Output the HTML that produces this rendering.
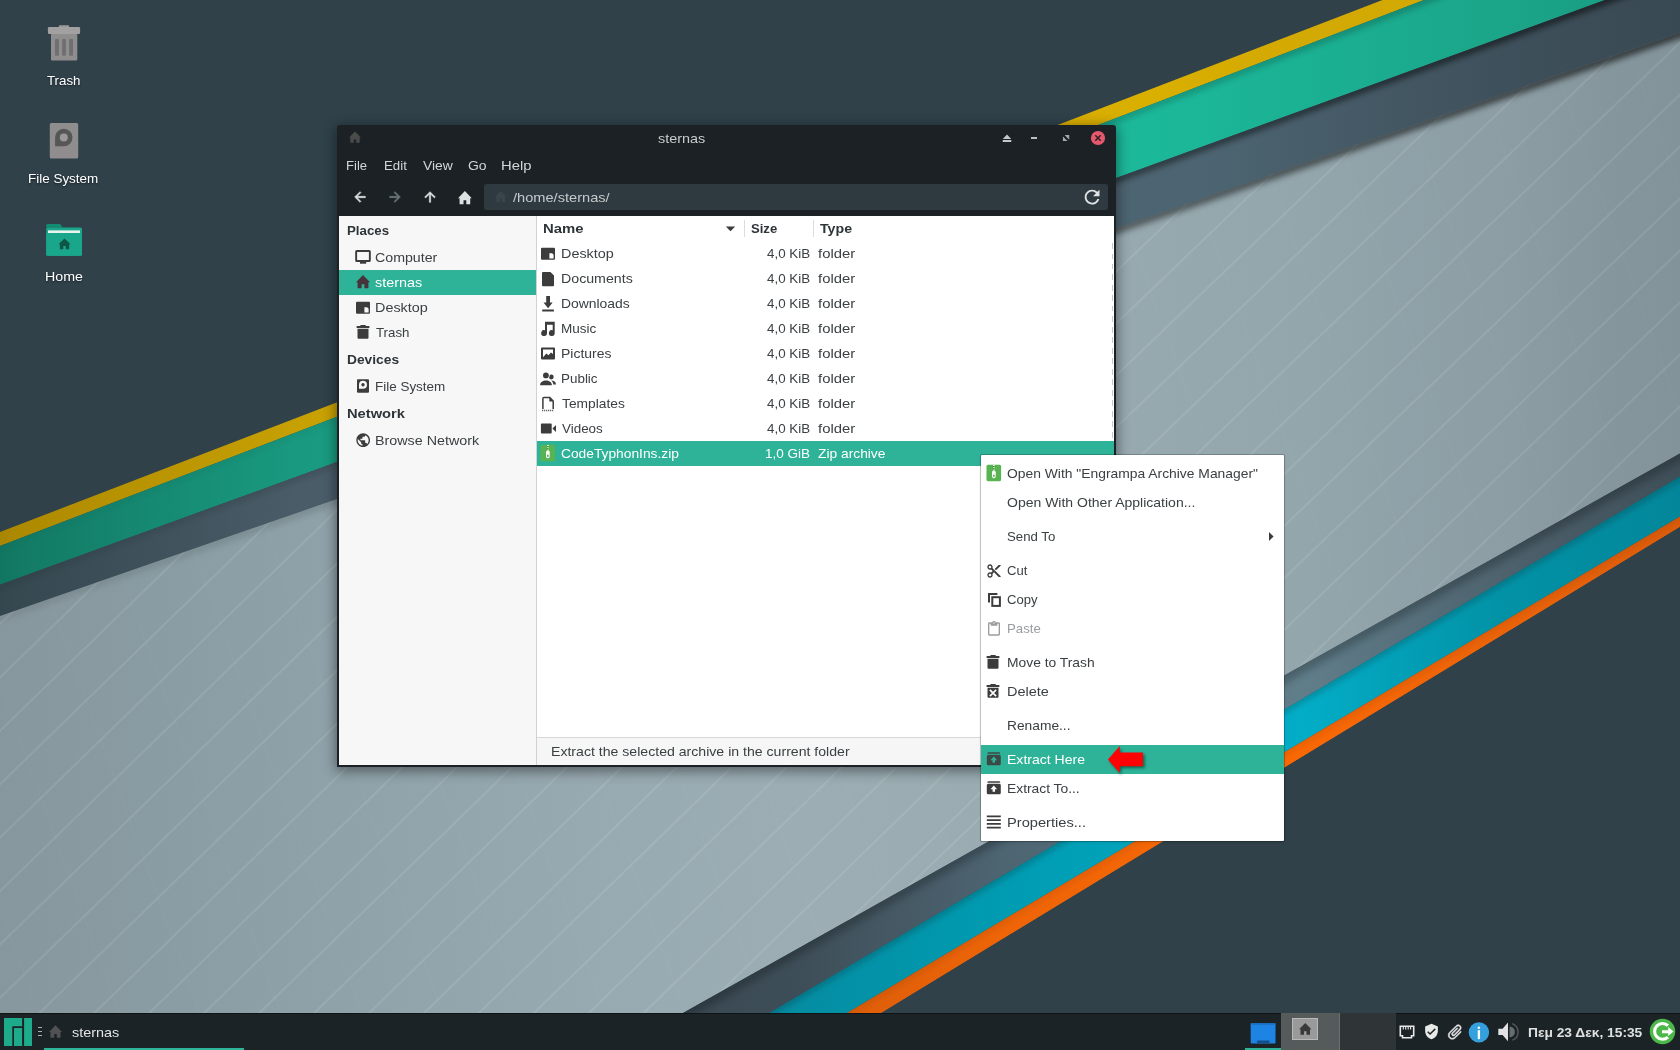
<!DOCTYPE html>
<html lang="en"><head><meta charset="utf-8"><title>sternas - File Manager</title>
<style>
html,body{margin:0;padding:0}
body{width:1680px;height:1050px;position:relative;overflow:hidden;background:#30414a;font-family:"Liberation Sans",sans-serif;}
.a{position:absolute;display:block}
.t{position:absolute;display:block;white-space:nowrap;height:20px;line-height:20px;transform-origin:0 50%;}
</style></head>
<body>
<svg class="a" style="left:0;top:0" width="1680" height="1050" viewBox="0 0 1680 1050">
<defs>
<linearGradient id="gy" gradientUnits="userSpaceOnUse" x1="0" y1="0" x2="1680" y2="0"><stop offset="0.000" stop-color="#a98600"/><stop offset="0.012" stop-color="#ae8a00"/><stop offset="0.179" stop-color="#c7a003"/><stop offset="0.476" stop-color="#d2a902"/><stop offset="0.685" stop-color="#d9af00"/><stop offset="0.774" stop-color="#d3a903"/><stop offset="0.851" stop-color="#d2a803"/></linearGradient>
<linearGradient id="gt" gradientUnits="userSpaceOnUse" x1="0" y1="0" x2="1680" y2="0"><stop offset="0.000" stop-color="#117661"/><stop offset="0.012" stop-color="#137a65"/><stop offset="0.179" stop-color="#199a80"/><stop offset="0.476" stop-color="#1bae90"/><stop offset="0.685" stop-color="#1cb89a"/><stop offset="0.774" stop-color="#1bb193"/><stop offset="0.893" stop-color="#1ba589"/><stop offset="0.958" stop-color="#199f83"/></linearGradient>
<linearGradient id="gd" gradientUnits="userSpaceOnUse" x1="0" y1="0" x2="1680" y2="0"><stop offset="0.000" stop-color="#34464e"/><stop offset="0.012" stop-color="#364850"/><stop offset="0.179" stop-color="#495c68"/><stop offset="0.476" stop-color="#4b606c"/><stop offset="0.714" stop-color="#4d6572"/><stop offset="0.893" stop-color="#3e505b"/><stop offset="1.000" stop-color="#394953"/></linearGradient>
<linearGradient id="gl" gradientUnits="userSpaceOnUse" x1="0" y1="0" x2="1680" y2="0"><stop offset="0.000" stop-color="#86979d"/><stop offset="0.037" stop-color="#88999f"/><stop offset="0.124" stop-color="#8b9ea5"/><stop offset="0.356" stop-color="#98aab1"/><stop offset="0.476" stop-color="#9caeb4"/><stop offset="0.595" stop-color="#9aacb2"/><stop offset="0.779" stop-color="#93a6ac"/><stop offset="0.898" stop-color="#8c9da4"/><stop offset="0.957" stop-color="#85969c"/><stop offset="1.000" stop-color="#82939a"/></linearGradient>
<linearGradient id="gd2" gradientUnits="userSpaceOnUse" x1="0" y1="0" x2="1680" y2="0"><stop offset="0.357" stop-color="#37454e"/><stop offset="0.476" stop-color="#3e4e58"/><stop offset="0.595" stop-color="#4d6471"/><stop offset="0.774" stop-color="#607e8a"/><stop offset="0.923" stop-color="#495c67"/><stop offset="1.000" stop-color="#3f4f58"/></linearGradient>
<linearGradient id="gc" gradientUnits="userSpaceOnUse" x1="0" y1="0" x2="1680" y2="0"><stop offset="0.417" stop-color="#05879b"/><stop offset="0.476" stop-color="#058da2"/><stop offset="0.595" stop-color="#009bb1"/><stop offset="0.774" stop-color="#03adc7"/><stop offset="0.893" stop-color="#0292a6"/><stop offset="1.000" stop-color="#03869a"/></linearGradient>
<linearGradient id="go" gradientUnits="userSpaceOnUse" x1="0" y1="0" x2="1680" y2="0"><stop offset="0.464" stop-color="#dc5c08"/><stop offset="0.536" stop-color="#e26009"/><stop offset="0.595" stop-color="#ee6407"/><stop offset="0.774" stop-color="#fa6804"/><stop offset="0.923" stop-color="#e8620a"/><stop offset="1.000" stop-color="#dc5c0a"/></linearGradient>
<linearGradient id="shg" gradientUnits="userSpaceOnUse" x1="0" y1="0" x2="1680" y2="0"><stop offset="0" stop-color="#000" stop-opacity=".08"/><stop offset=".25" stop-color="#000" stop-opacity=".15"/><stop offset=".6" stop-color="#000" stop-opacity=".45"/><stop offset="1" stop-color="#000" stop-opacity=".65"/></linearGradient>
<filter id="b3" x="-5%" y="-5%" width="110%" height="110%"><feGaussianBlur stdDeviation="3"/></filter>
<filter id="b5" x="-5%" y="-5%" width="110%" height="110%"><feGaussianBlur stdDeviation="5"/></filter>
<pattern id="ln" width="37.5" height="37.5" patternUnits="userSpaceOnUse" patternTransform="translate(1140.7 300) rotate(-43.8)"><rect x="0" y="-0.55" width="37.5" height="1.1" fill="#fff" fill-opacity=".17"/><rect x="0" y="36.95" width="37.5" height="1.1" fill="#fff" fill-opacity=".17"/></pattern>
<pattern id="lnb" width="38.3" height="38.3" patternUnits="userSpaceOnUse" patternTransform="translate(86.7 700) rotate(-44.2)"><rect x="0" y="-0.55" width="38.3" height="1.1" fill="#fff" fill-opacity=".17"/><rect x="0" y="37.75" width="38.3" height="1.1" fill="#fff" fill-opacity=".17"/></pattern>
<clipPath id="cR"><polygon points="1015,0 1680,0 1680,1050 722,1050 1015,767"/></clipPath><clipPath id="cL"><polygon points="0,0 1015,0 1015,767 722,1050 0,1050"/></clipPath>
<pattern id="ln2" width="76" height="76" patternUnits="userSpaceOnUse" patternTransform="translate(86.7 700) rotate(70)"><rect x="0" y="0" width="76" height="1" fill="#fff" fill-opacity=".025"/></pattern>

<clipPath id="clg"><polygon points="0.0,616.0 1680.0,32.4 1680.0,453.5 617.1,1050.0 0.0,1050.0"/></clipPath>
<clipPath id="cdg"><polygon points="0.0,584.7 1605.0,0.0 1680.0,0.0 1680.0,32.4 0.0,616.0"/></clipPath>
<clipPath id="cd2"><polygon points="1680.0,453.5 1680.0,476.6 706.2,1050.0 617.1,1050.0"/></clipPath>
<clipPath id="ccy"><polygon points="1680.0,476.6 1680.0,516.4 784.9,1050.0 706.2,1050.0"/></clipPath>
<clipPath id="cog"><polygon points="1680.0,516.4 1680.0,527.0 820.6,1050.0 784.9,1050.0"/></clipPath>
<clipPath id="ctl"><polygon points="0.0,546.0 1424.0,0.0 1605.0,0.0 0.0,584.7"/></clipPath>
</defs>
<rect width="1680" height="1050" fill="#30414a"/>
<polygon fill="url(#gy)" points="0.0,532.0 1382.5,0.0 1424.0,0.0 0.0,546.0"/>
<polygon fill="url(#gt)" points="0.0,546.0 1424.0,0.0 1605.0,0.0 0.0,584.7"/>
<g clip-path="url(#ctl)" opacity=".45"><line x1="-20" y1="554.7" x2="1700" y2="-104.8" stroke="url(#shg)" stroke-width="6" filter="url(#b3)"/></g>
<polygon fill="url(#gd)" points="0.0,584.7 1605.0,0.0 1680.0,0.0 1680.0,32.4 0.0,616.0"/>
<g clip-path="url(#cdg)"><line x1="-20" y1="593.0" x2="1700" y2="-33.6" stroke="url(#shg)" stroke-width="7" filter="url(#b3)"/></g>
<polygon fill="url(#gl)" points="0.0,616.0 1680.0,32.4 1680.0,453.5 617.1,1050.0 0.0,1050.0"/>
<polygon fill="url(#ln)" clip-path="url(#cR)" points="0.0,616.0 1680.0,32.4 1680.0,453.5 617.1,1050.0 0.0,1050.0"/>
<polygon fill="url(#lnb)" clip-path="url(#cL)" points="0.0,616.0 1680.0,32.4 1680.0,453.5 617.1,1050.0 0.0,1050.0"/>
<polygon fill="url(#ln2)" points="0.0,616.0 1680.0,32.4 1680.0,453.5 617.1,1050.0 0.0,1050.0"/>
<g clip-path="url(#clg)"><line x1="-20" y1="623.9" x2="1700" y2="26.5" stroke="url(#shg)" stroke-width="9" filter="url(#b3)"/></g>
<polygon fill="url(#gd2)" points="1680.0,453.5 1680.0,476.6 706.2,1050.0 617.1,1050.0"/>
<g clip-path="url(#cd2)"><line x1="500" y1="1116.7" x2="1700" y2="443.3" stroke="#000" stroke-opacity=".3" stroke-width="10" filter="url(#b5)"/></g>
<polygon fill="url(#gc)" points="1680.0,476.6 1680.0,516.4 784.9,1050.0 706.2,1050.0"/>
<g clip-path="url(#ccy)"><line x1="500" y1="1172.4" x2="1700" y2="465.8" stroke="#000" stroke-opacity=".3" stroke-width="4" filter="url(#b3)"/></g>
<polygon fill="url(#go)" points="1680.0,516.4 1680.0,527.0 820.6,1050.0 784.9,1050.0"/>
<g clip-path="url(#cog)"><line x1="500" y1="1220.9" x2="1700" y2="505.5" stroke="#000" stroke-opacity=".18" stroke-width="2.5" filter="url(#b3)"/></g>
<polygon fill="#30414a" points="1680.0,527.0 1680.0,1050.0 820.6,1050.0"/>
</svg>
<svg class="a" style="left:44px;top:22px;" width="40" height="42" viewBox="0 0 40 42">
<rect x="14.8" y="3.3" width="10.3" height="2.5" rx="1" fill="#9a9a9a"/>
<rect x="3.9" y="5" width="32.2" height="7" rx="1.2" fill="#a2a0a0"/>
<rect x="7" y="12" width="26.3" height="26.6" rx="1" fill="#8f8d8d"/>
<rect x="11" y="17.1" width="3.9" height="16.7" rx=".8" fill="#6f6f6f"/>
<rect x="18.1" y="17.1" width="3.8" height="16.7" rx=".8" fill="#6f6f6f"/>
<rect x="25.1" y="17.1" width="3.9" height="16.7" rx=".8" fill="#6f6f6f"/>
</svg>
<span class="t" style="left:46.55px;top:70.58px;font-size:13.33px;color:#ffffff;transform:scaleX(0.9969);text-shadow:0 1px 2px rgba(0,0,0,.6);">Trash</span>
<svg class="a" style="left:46px;top:120px;" width="36" height="42" viewBox="0 0 36 42">
<rect x="3.8" y="3" width="28.4" height="35.5" rx="1.5" fill="#8f8d8d"/>
<path d="M9.1 8.8 h8.7 a8.7 8.7 0 1 1 -8.7 8.7z" fill="#565656" transform="translate(0 26.3) scale(1 -1) translate(0 -8.7)"/>
<circle cx="17.8" cy="17.5" r="4" fill="#9a9898"/>
</svg>
<span class="t" style="left:27.99px;top:168.78px;font-size:13.33px;color:#ffffff;transform:scaleX(1.0096);text-shadow:0 1px 2px rgba(0,0,0,.6);">File System</span>
<svg class="a" style="left:44px;top:222px;" width="40" height="36" viewBox="0 0 40 36">
<path d="M2.2 3.5 a1.5 1.5 0 0 1 1.5-1.5 h12.5 l2.3 3.5 h-16.3z" fill="#128d74"/>
<rect x="2.2" y="5.5" width="35.8" height="28.2" rx="1.5" fill="#19a68a"/>
<rect x="4" y="8.4" width="32" height="2.6" fill="#e9f3f0"/>
<rect x="2.2" y="11" width="35.8" height="22.7" rx="1.5" fill="#19a68a"/>
<path transform="translate(14.5 16.6) scale(.86 .8)" fill="#0d5647" d="M7 0L14 7.2H12.4V13.3H8.4V9.3H5.6V13.3H1.6V7.2H0Z"/>
</svg>
<span class="t" style="left:44.63px;top:267.38px;font-size:13.33px;color:#ffffff;transform:scaleX(1.0676);text-shadow:0 1px 2px rgba(0,0,0,.6);">Home</span>
<div class="a" style="left:337px;top:125px;width:779px;height:642px;background:#1b2124;box-shadow:0 3px 13px 1px rgba(0,0,0,.45);border-radius:3px 3px 0 0;"></div>
<svg class="a" style="left:348.5px;top:131.2px;overflow:visible;" width="12" height="12.4" viewBox="0 0 14 13.4"><path fill="#4b4b4b" d="M7 0L14 7.2H12.4V13.3H8.4V9.3H5.6V13.3H1.6V7.2H0Z"/></svg>
<span class="t" style="left:658.46px;top:128.68px;font-size:13.33px;color:#c9cdcf;transform:scaleX(1.0807);">sternas</span>
<svg class="a" style="left:1001px;top:131px;" width="14" height="14" viewBox="0 0 14 14"><path fill="#c3c9ca" d="M1.7 11h8.6v-1.9H1.7zM6 3.4L1.8 8h8.4z"/></svg>
<div class="a" style="left:1031px;top:137px;width:6px;height:2px;background:#b9bfc0;"></div>
<svg class="a" style="left:1062px;top:134px;" width="8" height="8" viewBox="0 0 8 8"><path fill="#a4a9aa" d="M7.2 1.1v4.6L2.6 1.1zM.9 7.1V2.5l4.6 4.6z"/></svg>
<svg class="a" style="left:1090px;top:130px;" width="16" height="16" viewBox="0 0 16 16"><circle cx="8" cy="8" r="7.1" fill="#e8586d"/><path d="M5.3 5.3l5.4 5.4M10.7 5.3l-5.4 5.4" stroke="#2a2024" stroke-width="1.5"/></svg>
<span class="t" style="left:346.42px;top:156.48px;font-size:13.33px;color:#d2d6d8;transform:scaleX(0.9800);">File</span>
<span class="t" style="left:383.71px;top:156.48px;font-size:13.33px;color:#d2d6d8;transform:scaleX(0.9931);">Edit</span>
<span class="t" style="left:422.74px;top:156.48px;font-size:13.33px;color:#d2d6d8;transform:scaleX(1.0407);">View</span>
<span class="t" style="left:467.61px;top:156.48px;font-size:13.33px;color:#d2d6d8;transform:scaleX(1.0485);">Go</span>
<span class="t" style="left:501.09px;top:156.48px;font-size:13.33px;color:#d2d6d8;transform:scaleX(1.1107);">Help</span>
<svg class="a" style="left:352px;top:189px" width="16" height="16" viewBox="0 0 24 24" ><path fill="#dde1e2" d="M20 11H7.83l5.59-5.59L12 4l-8 8 8 8 1.41-1.41L7.83 13H20v-2z" stroke="#dde1e2" stroke-width="0.9"/></svg>
<svg class="a" style="left:386.5px;top:189px" width="16" height="16" viewBox="0 0 24 24" ><path fill="#6d7578" d="M12 4l-1.41 1.41L16.17 11H4v2h12.17l-5.58 5.59L12 20l8-8z" stroke="#6d7578" stroke-width="0.9"/></svg>
<svg class="a" style="left:422px;top:189px" width="16" height="16" viewBox="0 0 24 24" ><path fill="#dde1e2" d="M4 12l1.41 1.41L11 7.83V20h2V7.83l5.58 5.59L20 12l-8-8-8 8z" stroke="#dde1e2" stroke-width="0.9"/></svg>
<svg class="a" style="left:458px;top:190.9px;overflow:visible;" width="13.8" height="13.3" viewBox="0 0 14 13.4"><path fill="#dde1e2" d="M7 0L14 7.2H12.4V13.3H8.4V9.3H5.6V13.3H1.6V7.2H0Z"/></svg>
<div class="a" style="left:484px;top:184px;width:624px;height:26px;background:#2f3a40;border-radius:3px;"></div>
<svg class="a" style="left:494.8px;top:191.2px;overflow:visible;" width="11.5" height="11.3" viewBox="0 0 14 13.4"><path fill="#3a4549" d="M7 0L14 7.2H12.4V13.3H8.4V9.3H5.6V13.3H1.6V7.2H0Z"/></svg>
<span class="t" style="left:513.00px;top:188.28px;font-size:13.33px;color:#c5cacc;transform:scaleX(1.0966);">/home/sternas/</span>
<svg class="a" style="left:1081.1px;top:185.8px" width="22.2" height="22.2" viewBox="0 0 24 24" ><path fill="#dfe3e4" d="M17.65 6.35C16.2 4.9 14.21 4 12 4c-4.42 0-7.99 3.58-7.99 8s3.57 8 7.99 8c3.73 0 6.84-2.55 7.73-6h-2.08c-.82 2.33-3.04 4-5.65 4-3.31 0-6-2.69-6-6s2.69-6 6-6c1.66 0 3.14.69 4.22 1.78L13 11h7V4l-2.35 2.35z"/></svg>
<div class="a" style="left:339px;top:216px;width:197px;height:549px;background:#f7f7f7;"></div>
<div class="a" style="left:536px;top:216px;width:1px;height:549px;background:#d2d2d2;"></div>
<div class="a" style="left:537px;top:216px;width:577px;height:522px;background:#ffffff;"></div>
<div class="a" style="left:537px;top:737px;width:577px;height:1px;background:#d8d8d8;"></div>
<div class="a" style="left:537px;top:738px;width:577px;height:27px;background:#f6f6f6;"></div>
<span class="t" style="left:346.90px;top:221.28px;font-size:13.33px;color:#2e3538;font-weight:700;transform:scaleX(0.9963);">Places</span>
<svg class="a" style="left:355px;top:249px;" width="16" height="16" viewBox="0 0 16 16"><rect x="1.15" y="1.95" width="13.7" height="10.1" rx=".6" fill="none" stroke="#3c3c3c" stroke-width="1.9"/><rect x="5" y="13" width="6.2" height="1.7" fill="#3c3c3c"/></svg>
<span class="t" style="left:375.00px;top:248.28px;font-size:13.33px;color:#3b4043;transform:scaleX(1.0643);">Computer</span>
<div class="a" style="left:339px;top:270px;width:197px;height:25px;background:#2eb398;"></div>
<svg class="a" style="left:355.9px;top:275.3px;overflow:visible;" width="14" height="13.5" viewBox="0 0 14 13.4"><path fill="#47343a" d="M7 0L14 7.2H12.4V13.3H8.4V9.3H5.6V13.3H1.6V7.2H0Z"/></svg>
<span class="t" style="left:375.26px;top:273.28px;font-size:13.33px;color:#ffffff;transform:scaleX(1.0807);">sternas</span>
<svg class="a" style="left:355px;top:299.5px;" width="16" height="16" viewBox="0 0 16 16"><path fill="#3c3c3c" d="M2 1.7h12a1 1 0 0 1 1 1v10a1 1 0 0 1-1 1H2a1 1 0 0 1-1-1v-10a1 1 0 0 1 1-1z"/><path fill="#f7f7f7" d="M9.4 7.2h2.7l1.5 1.5v3.8H9.4z"/></svg>
<span class="t" style="left:374.72px;top:298.28px;font-size:13.33px;color:#3b4043;transform:scaleX(1.0794);">Desktop</span>
<svg class="a" style="left:354.6px;top:324px;" width="16" height="16" viewBox="0 0 16 16"><path fill="#3c3c3c" d="M5.4 1h5.3v1.2H5.4zM1.6 2.1h12.8v1.8H1.6zM2.5 4.8h11v9a1 1 0 0 1-1 1h-9a1 1 0 0 1-1-1z"/></svg>
<span class="t" style="left:375.55px;top:323.28px;font-size:13.33px;color:#3b4043;transform:scaleX(0.9969);">Trash</span>
<span class="t" style="left:346.87px;top:350.28px;font-size:13.33px;color:#2e3538;font-weight:700;transform:scaleX(1.0338);">Devices</span>
<svg class="a" style="left:355px;top:378px;" width="16" height="16" viewBox="0 0 16 16"><path fill="#3c3c3c" d="M3 1.2h10a1 1 0 0 1 1 1v11.6a1 1 0 0 1-1 1H3a1 1 0 0 1-1-1V2.2a1 1 0 0 1 1-1z"/><path fill="#f7f7f7" d="M4 10.8V6.8a4 4 0 1 1 4 4z"/><circle cx="8" cy="6.8" r="1.7" fill="#3c3c3c"/></svg>
<span class="t" style="left:374.79px;top:377.28px;font-size:13.33px;color:#3b4043;transform:scaleX(1.0096);">File System</span>
<span class="t" style="left:346.80px;top:404.28px;font-size:13.33px;color:#2e3538;font-weight:700;transform:scaleX(1.1029);">Network</span>
<svg class="a" style="left:355px;top:432px" width="16.4" height="16.4" viewBox="0 0 24 24" ><path fill="#3c3c3c" d="M12 2C6.48 2 2 6.48 2 12s4.48 10 10 10 10-4.48 10-10S17.52 2 12 2zm-1 17.93c-3.95-.49-7-3.85-7-7.93 0-.62.08-1.21.21-1.79L9 15v1c0 1.1.9 2 2 2v1.93zm6.9-2.54c-.26-.81-1-1.39-1.9-1.39h-1v-3c0-.55-.45-1-1-1H8v-2h2c.55 0 1-.45 1-1V7h2c1.1 0 2-.9 2-2v-.41c2.93 1.19 5 4.06 5 7.41 0 2.08-.8 3.97-2.1 5.39z"/></svg>
<span class="t" style="left:374.73px;top:431.28px;font-size:13.33px;color:#3b4043;transform:scaleX(1.0729);">Browse Network</span>
<span class="t" style="left:542.68px;top:219.08px;font-size:13.33px;color:#2e3538;font-weight:700;transform:scaleX(1.1165);">Name</span>
<svg class="a" style="left:725px;top:226px;" width="11" height="6" viewBox="0 0 11 6"><path fill="#3c3c3c" d="M.8.6h9.4L5.5 5.2z"/></svg>
<div class="a" style="left:744px;top:220px;width:1px;height:17px;background:#dcdcdc;"></div>
<span class="t" style="left:750.81px;top:219.08px;font-size:13.33px;color:#2e3538;font-weight:700;transform:scaleX(0.9825);">Size</span>
<div class="a" style="left:813px;top:220px;width:1px;height:17px;background:#dcdcdc;"></div>
<span class="t" style="left:820.23px;top:219.08px;font-size:13.33px;color:#2e3538;font-weight:700;transform:scaleX(1.0644);">Type</span>
<div class="a" style="left:1112px;top:243px;width:1px;height:495px;background:repeating-linear-gradient(180deg,#c9c9c9 0 5.5px,transparent 5.5px 10.5px);"></div>
<span class="t" style="left:560.72px;top:244.28px;font-size:13.33px;color:#3b4043;transform:scaleX(1.0794);">Desktop</span>
<span class="t" style="left:767.05px;top:244.28px;font-size:13.33px;color:#3b4043;transform:scaleX(1.0024);">4,0 KiB</span>
<span class="t" style="left:818.22px;top:244.28px;font-size:13.33px;color:#3b4043;transform:scaleX(1.1145);">folder</span>
<span class="t" style="left:560.74px;top:269.28px;font-size:13.33px;color:#3b4043;transform:scaleX(1.0644);">Documents</span>
<span class="t" style="left:767.05px;top:269.28px;font-size:13.33px;color:#3b4043;transform:scaleX(1.0024);">4,0 KiB</span>
<span class="t" style="left:818.22px;top:269.28px;font-size:13.33px;color:#3b4043;transform:scaleX(1.1145);">folder</span>
<span class="t" style="left:560.76px;top:294.28px;font-size:13.33px;color:#3b4043;transform:scaleX(1.0426);">Downloads</span>
<span class="t" style="left:767.05px;top:294.28px;font-size:13.33px;color:#3b4043;transform:scaleX(1.0024);">4,0 KiB</span>
<span class="t" style="left:818.22px;top:294.28px;font-size:13.33px;color:#3b4043;transform:scaleX(1.1145);">folder</span>
<span class="t" style="left:560.79px;top:319.28px;font-size:13.33px;color:#3b4043;transform:scaleX(1.0149);">Music</span>
<span class="t" style="left:767.05px;top:319.28px;font-size:13.33px;color:#3b4043;transform:scaleX(1.0024);">4,0 KiB</span>
<span class="t" style="left:818.22px;top:319.28px;font-size:13.33px;color:#3b4043;transform:scaleX(1.1145);">folder</span>
<span class="t" style="left:560.75px;top:344.28px;font-size:13.33px;color:#3b4043;transform:scaleX(1.0481);">Pictures</span>
<span class="t" style="left:767.05px;top:344.28px;font-size:13.33px;color:#3b4043;transform:scaleX(1.0024);">4,0 KiB</span>
<span class="t" style="left:818.22px;top:344.28px;font-size:13.33px;color:#3b4043;transform:scaleX(1.1145);">folder</span>
<span class="t" style="left:560.79px;top:369.28px;font-size:13.33px;color:#3b4043;transform:scaleX(1.0071);">Public</span>
<span class="t" style="left:767.05px;top:369.28px;font-size:13.33px;color:#3b4043;transform:scaleX(1.0024);">4,0 KiB</span>
<span class="t" style="left:818.22px;top:369.28px;font-size:13.33px;color:#3b4043;transform:scaleX(1.1145);">folder</span>
<span class="t" style="left:561.54px;top:394.28px;font-size:13.33px;color:#3b4043;transform:scaleX(1.0333);">Templates</span>
<span class="t" style="left:767.05px;top:394.28px;font-size:13.33px;color:#3b4043;transform:scaleX(1.0024);">4,0 KiB</span>
<span class="t" style="left:818.22px;top:394.28px;font-size:13.33px;color:#3b4043;transform:scaleX(1.1145);">folder</span>
<span class="t" style="left:561.55px;top:419.28px;font-size:13.33px;color:#3b4043;transform:scaleX(1.0063);">Videos</span>
<span class="t" style="left:767.05px;top:419.28px;font-size:13.33px;color:#3b4043;transform:scaleX(1.0024);">4,0 KiB</span>
<span class="t" style="left:818.22px;top:419.28px;font-size:13.33px;color:#3b4043;transform:scaleX(1.1145);">folder</span>
<div class="a" style="left:537px;top:441px;width:577px;height:25px;background:#2eb398;"></div>
<span class="t" style="left:561.03px;top:444.28px;font-size:13.33px;color:#ffffff;transform:scaleX(1.0333);">CodeTyphonIns.zip</span>
<span class="t" style="left:764.58px;top:444.28px;font-size:13.33px;color:#ffffff;transform:scaleX(1.0152);">1,0 GiB</span>
<span class="t" style="left:817.78px;top:444.28px;font-size:13.33px;color:#ffffff;transform:scaleX(1.0344);">Zip archive</span>
<svg class="a" style="left:540px;top:245.5px;" width="16" height="16" viewBox="0 0 16 16"><path fill="#3c3c3c" d="M2 1.7h12a1 1 0 0 1 1 1v10a1 1 0 0 1-1 1H2a1 1 0 0 1-1-1v-10a1 1 0 0 1 1-1z"/><path fill="#fff" d="M9.4 7.2h2.7l1.5 1.5v3.8H9.4z"/></svg>
<svg class="a" style="left:540px;top:270.5px;" width="16" height="16" viewBox="0 0 16 16"><path fill="#3c3c3c" d="M3 .9h7.4L14 4.5v9.8a1 1 0 0 1-1 1H3a1 1 0 0 1-1-1V1.9a1 1 0 0 1 1-1z"/></svg>
<svg class="a" style="left:540px;top:295.5px;" width="16" height="16" viewBox="0 0 16 16"><path fill="#3c3c3c" d="M6.2 -.4h3.8v6.9h2.7L8.1 12.2 3.5 6.5h2.7zM2.2 13.6h11.7v2H2.2z"/></svg>
<svg class="a" style="left:540px;top:320.5px;" width="16" height="16" viewBox="0 0 16 16"><path fill="#3c3c3c" d="M5 .8h9.7v11.2a2.9 2.9 0 1 1-2-2.75V3.8H7v8.2a2.9 2.9 0 1 1-2-2.75z"/></svg>
<svg class="a" style="left:540px;top:345.5px;" width="16" height="16" viewBox="0 0 16 16"><path fill="#3c3c3c" d="M2 1.5h12a1 1 0 0 1 1 1v10a1 1 0 0 1-1 1H2a1 1 0 0 1-1-1v-10a1 1 0 0 1 1-1z"/><path fill="#fff" d="M3 3.5h10v4.6l-2-1.6-2.6 2.7-2-1.6L3 11.2z"/></svg>
<svg class="a" style="left:540px;top:370.5px;overflow:visible;" width="16" height="16" viewBox="0 0 16 16"><circle cx="11.3" cy="6" r="2.4" fill="#3c3c3c"/><circle cx="5.9" cy="4.4" r="3.7" fill="#fff"/><circle cx="5.9" cy="4.4" r="2.9" fill="#3c3c3c"/><path fill="#3c3c3c" d="M.1 14.2C.1 11 3 9.5 6 9.5S11.9 11 11.9 14.2ZM11.1 9.6C14 9.6 16 11.2 16 13.4H13.3C13.3 11.8 12.4 10.5 11.1 9.6Z"/></svg>
<svg class="a" style="left:540px;top:395.5px;" width="16" height="16" viewBox="0 0 16 16"><path fill="none" stroke="#3c3c3c" stroke-width="1.5" d="M2.9 13V2.6a1 1 0 0 1 1-1h5.9l3.4 3.4V13"/><path fill="#3c3c3c" d="M9.3 1.6v4h4z"/><path stroke="#3c3c3c" stroke-width="1.3" stroke-dasharray="1 1" d="M2.2 14.5h11.8"/></svg>
<svg class="a" style="left:540px;top:420.5px;" width="16" height="16" viewBox="0 0 16 16"><path fill="#3c3c3c" d="M1.8 2.6h9a.9.9 0 0 1 .9.9v8a.9.9 0 0 1-.9.9h-9a.9.9 0 0 1-.9-.9v-8a.9.9 0 0 1 .9-.9zM12.4 7.5L16 4.1v6.8z"/></svg>
<svg class="a" style="left:540px;top:445px;overflow:visible;" width="16" height="16.4" viewBox="0 0 16 16.4"><rect x=".5" y="-.2" width="14.6" height="16.4" rx="1.5" fill="#58b452"/><path stroke="#fff" stroke-width="1.6" stroke-dasharray="1.1 1.1" d="M7.8 0v5.5"/><path stroke="#2b5e28" stroke-width=".8" stroke-dasharray="1.1 1.1" stroke-dashoffset="1.1" d="M7.4 0v5.5"/><rect x="6" y="5.5" width="3.7" height="7.8" rx="1.7" fill="#fff"/><rect x="7" y="9.6" width="1.7" height="2.4" rx=".8" fill="#58b452"/></svg>
<span class="t" style="left:550.64px;top:742.08px;font-size:13.33px;color:#3b4043;transform:scaleX(1.0580);">Extract the selected archive in the current folder</span>
<div class="a" style="left:981px;top:455px;width:303px;height:386px;background:#ffffff;box-shadow:0 0 0 1px rgba(0,0,0,.2),0 1px 3px rgba(0,0,0,.15);border-radius:1px;"></div>
<div class="a" style="left:981px;top:745px;width:303px;height:29px;background:#2eb398;"></div>
<span class="t" style="left:1007.02px;top:464.28px;font-size:13.33px;color:#3b4043;transform:scaleX(1.0400);">Open With &quot;Engrampa Archive Manager&quot;</span>
<span class="t" style="left:1007.01px;top:493.28px;font-size:13.33px;color:#3b4043;transform:scaleX(1.0505);">Open With Other Application...</span>
<span class="t" style="left:1007.06px;top:527.28px;font-size:13.33px;color:#3b4043;transform:scaleX(0.9926);">Send To</span>
<span class="t" style="left:1007.06px;top:561.28px;font-size:13.33px;color:#3b4043;transform:scaleX(0.9800);">Cut</span>
<span class="t" style="left:1007.06px;top:590.28px;font-size:13.33px;color:#3b4043;transform:scaleX(0.9818);">Copy</span>
<span class="t" style="left:1006.81px;top:619.28px;font-size:13.33px;color:#9a9ea0;transform:scaleX(0.9908);">Paste</span>
<span class="t" style="left:1006.76px;top:653.28px;font-size:13.33px;color:#3b4043;transform:scaleX(1.0376);">Move to Trash</span>
<span class="t" style="left:1006.71px;top:682.28px;font-size:13.33px;color:#3b4043;transform:scaleX(1.0865);">Delete</span>
<span class="t" style="left:1006.77px;top:716.28px;font-size:13.33px;color:#3b4043;transform:scaleX(1.0329);">Rename...</span>
<span class="t" style="left:1006.75px;top:750.28px;font-size:13.33px;color:#ffffff;transform:scaleX(1.0538);">Extract Here</span>
<span class="t" style="left:1006.76px;top:779.28px;font-size:13.33px;color:#3b4043;transform:scaleX(1.0368);">Extract To...</span>
<span class="t" style="left:1006.70px;top:813.28px;font-size:13.33px;color:#3b4043;transform:scaleX(1.0993);">Properties...</span>
<svg class="a" style="left:986px;top:465.3px;overflow:visible;" width="16" height="16.4" viewBox="0 0 16 16.4"><rect x=".5" y="-.2" width="14.6" height="16.4" rx="1.5" fill="#58b452"/><path stroke="#fff" stroke-width="1.6" stroke-dasharray="1.1 1.1" d="M7.8 0v5.5"/><path stroke="#2b5e28" stroke-width=".8" stroke-dasharray="1.1 1.1" stroke-dashoffset="1.1" d="M7.4 0v5.5"/><rect x="6" y="5.5" width="3.7" height="7.8" rx="1.7" fill="#fff"/><rect x="7" y="9.6" width="1.7" height="2.4" rx=".8" fill="#58b452"/></svg>
<svg class="a" style="left:1268px;top:531px;" width="7" height="11" viewBox="0 0 7 11"><path fill="#3c3c3c" d="M1 1l4.6 4.5L1 10z"/></svg>
<svg class="a" style="left:986px;top:562.5px" width="16" height="16" viewBox="0 0 24 24" ><path fill="#3c3c3c" d="M9.64 7.64c.23-.5.36-1.05.36-1.64 0-2.21-1.79-4-4-4S2 3.79 2 6s1.79 4 4 4c.59 0 1.14-.13 1.64-.36L10 12l-2.36 2.36C7.14 14.13 6.59 14 6 14c-2.21 0-4 1.79-4 4s1.79 4 4 4 4-1.79 4-4c0-.59-.13-1.14-.36-1.64L12 14l7 7h3v-1L9.64 7.64zM6 8c-1.1 0-2-.89-2-2s.9-2 2-2 2 .89 2 2-.9 2-2 2zm0 12c-1.1 0-2-.89-2-2s.9-2 2-2 2 .89 2 2-.9 2-2 2zm6-7.5c-.28 0-.5-.22-.5-.5s.22-.5.5-.5.5.22.5.5-.22.5-.5.5zM19 3l-6 6 2 2 7-7V3z"/></svg>
<svg class="a" style="left:986px;top:591.5px;" width="16" height="16" viewBox="0 0 16 16"><path fill="none" stroke="#3c3c3c" stroke-width="2" d="M3 10.6V1.9h8.4"/><rect x="6.3" y="5.2" width="7.6" height="8.7" fill="none" stroke="#3c3c3c" stroke-width="2"/></svg>
<svg class="a" style="left:986px;top:620.5px" width="16" height="16" viewBox="0 0 24 24" ><path fill="#9c9c9c" d="M19 2h-4.18C14.4.84 13.3 0 12 0c-1.3 0-2.4.84-2.82 2H5c-1.1 0-2 .9-2 2v16c0 1.1.9 2 2 2h14c1.1 0 2-.9 2-2V4c0-1.1-.9-2-2-2zm-7 0c.55 0 1 .45 1 1s-.45 1-1 1-1-.45-1-1 .45-1 1-1zm7 18H5V4h2v3h10V4h2v16z"/></svg>
<svg class="a" style="left:985.4px;top:654px;" width="16" height="16" viewBox="0 0 16 16"><path fill="#3c3c3c" d="M5.4 1h5.3v1.2H5.4zM1.6 2.1h12.8v1.8H1.6zM2.5 4.8h11v9a1 1 0 0 1-1 1h-9a1 1 0 0 1-1-1z"/></svg>
<svg class="a" style="left:985.4px;top:683px;" width="16" height="16" viewBox="0 0 16 16"><path fill="#3c3c3c" d="M5.4 1h5.3v1.2H5.4zM1.6 2.1h12.8v1.8H1.6zM2.5 4.8h11v9a1 1 0 0 1-1 1h-9a1 1 0 0 1-1-1z"/><path stroke="#ffffff" stroke-width="1.7" d="M4.9 6.9l6.2 6.2M11.1 6.9l-6.2 6.2"/></svg>
<svg class="a" style="left:986px;top:751.3px;" width="16" height="16" viewBox="0 0 16 16"><path fill="#3c4a47" d="M2 1.2h11.6l.9 1.5H1.1zM2.3 3.7h11a1.5 1.5 0 0 1 1.5 1.5v7.5a1.5 1.5 0 0 1-1.5 1.5h-11a1.5 1.5 0 0 1-1.5-1.5V5.2a1.5 1.5 0 0 1 1.5-1.5z"/><path fill="#2eb398" d="M7.8 5.6l3.3 3.6H9v2.6H6.6V9.2H4.5z"/></svg>
<svg class="a" style="left:986px;top:780.3px;" width="16" height="16" viewBox="0 0 16 16"><path fill="#3c3c3c" d="M2 1.2h11.6l.9 1.5H1.1zM2.3 3.7h11a1.5 1.5 0 0 1 1.5 1.5v7.5a1.5 1.5 0 0 1-1.5 1.5h-11a1.5 1.5 0 0 1-1.5-1.5V5.2a1.5 1.5 0 0 1 1.5-1.5z"/><path fill="#ffffff" d="M7.8 5.6l3.3 3.6H9v2.6H6.6V9.2H4.5z"/></svg>
<svg class="a" style="left:986px;top:814px;" width="16" height="16" viewBox="0 0 16 16"><path fill="#3c3c3c" d="M.8 1.6h14v1.7H.8zM.8 5.3h14V7H.8zM.8 9h14v1.7H.8zM.8 12.7h14v1.7H.8z"/></svg>
<svg class="a" style="left:1100px;top:740px;" width="54" height="40" viewBox="0 0 54 40"><defs><filter id="rs" x="-20%" y="-20%" width="150%" height="160%"><feGaussianBlur stdDeviation="1.4"/></filter></defs><path d="M9.6 21.4L21.4 7.9V14.4H44.8V28.1H21.4V34.9Z" fill="#043" opacity=".7" filter="url(#rs)"/><path d="M7.95 19.6L19.8 6.1V12.6H43V26.3H19.8V33.1Z" fill="#fd0303"/></svg>
<div class="a" style="left:0px;top:1013px;width:1680px;height:37px;background:#1c2326;"></div>
<div class="a" style="left:0px;top:1013px;width:1680px;height:1px;background:#0e1416;"></div>
<svg class="a" style="left:3.94px;top:1017.86px;" width="28.2" height="28.2" viewBox="0 0 28.2 28.2"><path fill="#1eab8c" d="M0 0h18.1v8.3H8.3v19.9H0zM10 10h8.1v18.2H10zM20.1 0h8.1v28.2h-8.1z"/></svg>
<div class="a" style="left:37.6px;top:1027px;width:4.8px;height:1px;background:#a9aeb0;"></div>
<div class="a" style="left:37.6px;top:1031px;width:4.8px;height:1px;background:#a9aeb0;"></div>
<div class="a" style="left:37.6px;top:1035px;width:4.8px;height:1px;background:#a9aeb0;"></div>
<svg class="a" style="left:49.1px;top:1024.9px;overflow:visible;" width="13" height="13.1" viewBox="0 0 14 13.4"><path fill="#505152" d="M7 0L14 7.2H12.4V13.3H8.4V9.3H5.6V13.3H1.6V7.2H0Z"/></svg>
<span class="t" style="left:71.96px;top:1022.78px;font-size:13.33px;color:#e3e5e6;transform:scaleX(1.0807);">sternas</span>
<div class="a" style="left:44px;top:1048px;width:200px;height:2px;background:#2eb398;"></div>
<svg class="a" style="left:1250px;top:1022px;" width="26" height="23" viewBox="0 0 26 23"><rect x=".7" y="1.2" width="24.8" height="20.4" rx="1" fill="#1e84e3"/><rect x=".7" y="1.2" width="24.8" height="1.6" fill="#1a6fc0"/><rect x="7" y="18.6" width="12.5" height="2.4" rx=".5" fill="#134f8c"/></svg>
<div class="a" style="left:1245px;top:1048px;width:36px;height:2px;background:#2eb398;"></div>
<div class="a" style="left:1281px;top:1013px;width:58px;height:37px;background:#555a5b;"></div>
<div class="a" style="left:1338.5px;top:1013px;width:1px;height:37px;background:#6a6f70;"></div>
<div class="a" style="left:1339.5px;top:1013px;width:56px;height:37px;background:#2f3536;"></div>
<div class="a" style="left:1292px;top:1018px;width:26px;height:22px;background:#9a9a9a;box-shadow:inset 0 0 0 1px #b9b9b9;"></div>
<svg class="a" style="left:1298.8px;top:1023px;overflow:visible;" width="12.5" height="11.8" viewBox="0 0 14 13.4"><path fill="#3a3a3a" d="M7 0L14 7.2H12.4V13.3H8.4V9.3H5.6V13.3H1.6V7.2H0Z"/></svg>
<svg class="a" style="left:1399px;top:1024px;" width="16" height="16" viewBox="0 0 16 16"><path fill="none" stroke="#e8e9e9" stroke-width="1.6" d="M1.3 2.2h13.4v9.6h-2.2v1.9H3.5v-1.9H1.3z"/><path stroke="#e8e9e9" stroke-width="1.1" d="M4.3 3v2.6M6.7 3v2.6M9.2 3v2.6M11.6 3v2.6"/></svg>
<svg class="a" style="left:1422.5px;top:1023px" width="17" height="17" viewBox="0 0 24 24" ><path fill="#e8e9e9" d="M12 1L3 5v6c0 5.55 3.84 10.74 9 12 5.16-1.26 9-6.45 9-12V5l-9-4zm-2 16l-4-4 1.41-1.41L10 14.17l6.59-6.59L18 9l-8 8z"/></svg>
<svg class="a" style="left:1446px;top:1022.5px" width="18" height="18" viewBox="0 0 24 24" transform="rotate(45)"><path fill="#e8e9e9" d="M16.5 6v11.5c0 2.21-1.79 4-4 4s-4-1.79-4-4V5c0-1.38 1.12-2.5 2.5-2.5s2.5 1.12 2.5 2.5v10.5c0 .55-.45 1-1 1s-1-.45-1-1V6H10v9.5c0 1.38 1.12 2.5 2.5 2.5s2.5-1.12 2.5-2.5V5c0-2.21-1.79-4-4-4S7 2.79 7 5v12.5c0 3.04 2.46 5.5 5.5 5.5s5.5-2.46 5.5-5.5V6h-1.5z" stroke="#e8e9e9" stroke-width="0.7"/></svg>
<svg class="a" style="left:1468px;top:1021.5px;" width="21.4" height="21.4" viewBox="0 0 21.4 21.4"><circle cx="10.9" cy="10.4" r="10.2" fill="#34a0de"/><rect x="9.75" y="8.2" width="2.3" height="8.9" fill="#fff"/><rect x="9.75" y="4.7" width="2.3" height="2.1" fill="#fff"/></svg>
<svg class="a" style="left:1497px;top:1021px;" width="22" height="22" viewBox="0 0 22 22"><path fill="#e2e2e2" d="M1.3 7.8h4.3L11 1.4v18.9l-5.4-6.2H1.3z"/><path fill="#676d6f" d="M12.5 5.5A5.4 5.4 0 0 1 12.5 16.3z"/><path fill="none" stroke="#565c5e" stroke-width="1.3" d="M15.24 2.54A8.9 8.9 0 0 1 15.24 19.26"/></svg>
<span class="t" style="left:1527.87px;top:1022.78px;font-size:13.33px;color:#dfe1e1;font-weight:700;transform:scaleX(1.0325);">Πεμ 23 Δεκ, 15:35</span>
<svg class="a" style="left:1649px;top:1018px;" width="27" height="27" viewBox="0 0 27 27"><circle cx="13.5" cy="13.4" r="12.75" fill="#4cb84a"/><path fill="none" stroke="#fff" stroke-width="3.1" d="M18.99 7.72A7.9 7.9 0 1 0 18.99 19.08"/><path fill="#fff" d="M13 12.3h6.2V8.9l5.3 4.5-5.3 4.5v-2.6H13z"/></svg>
</body></html>
